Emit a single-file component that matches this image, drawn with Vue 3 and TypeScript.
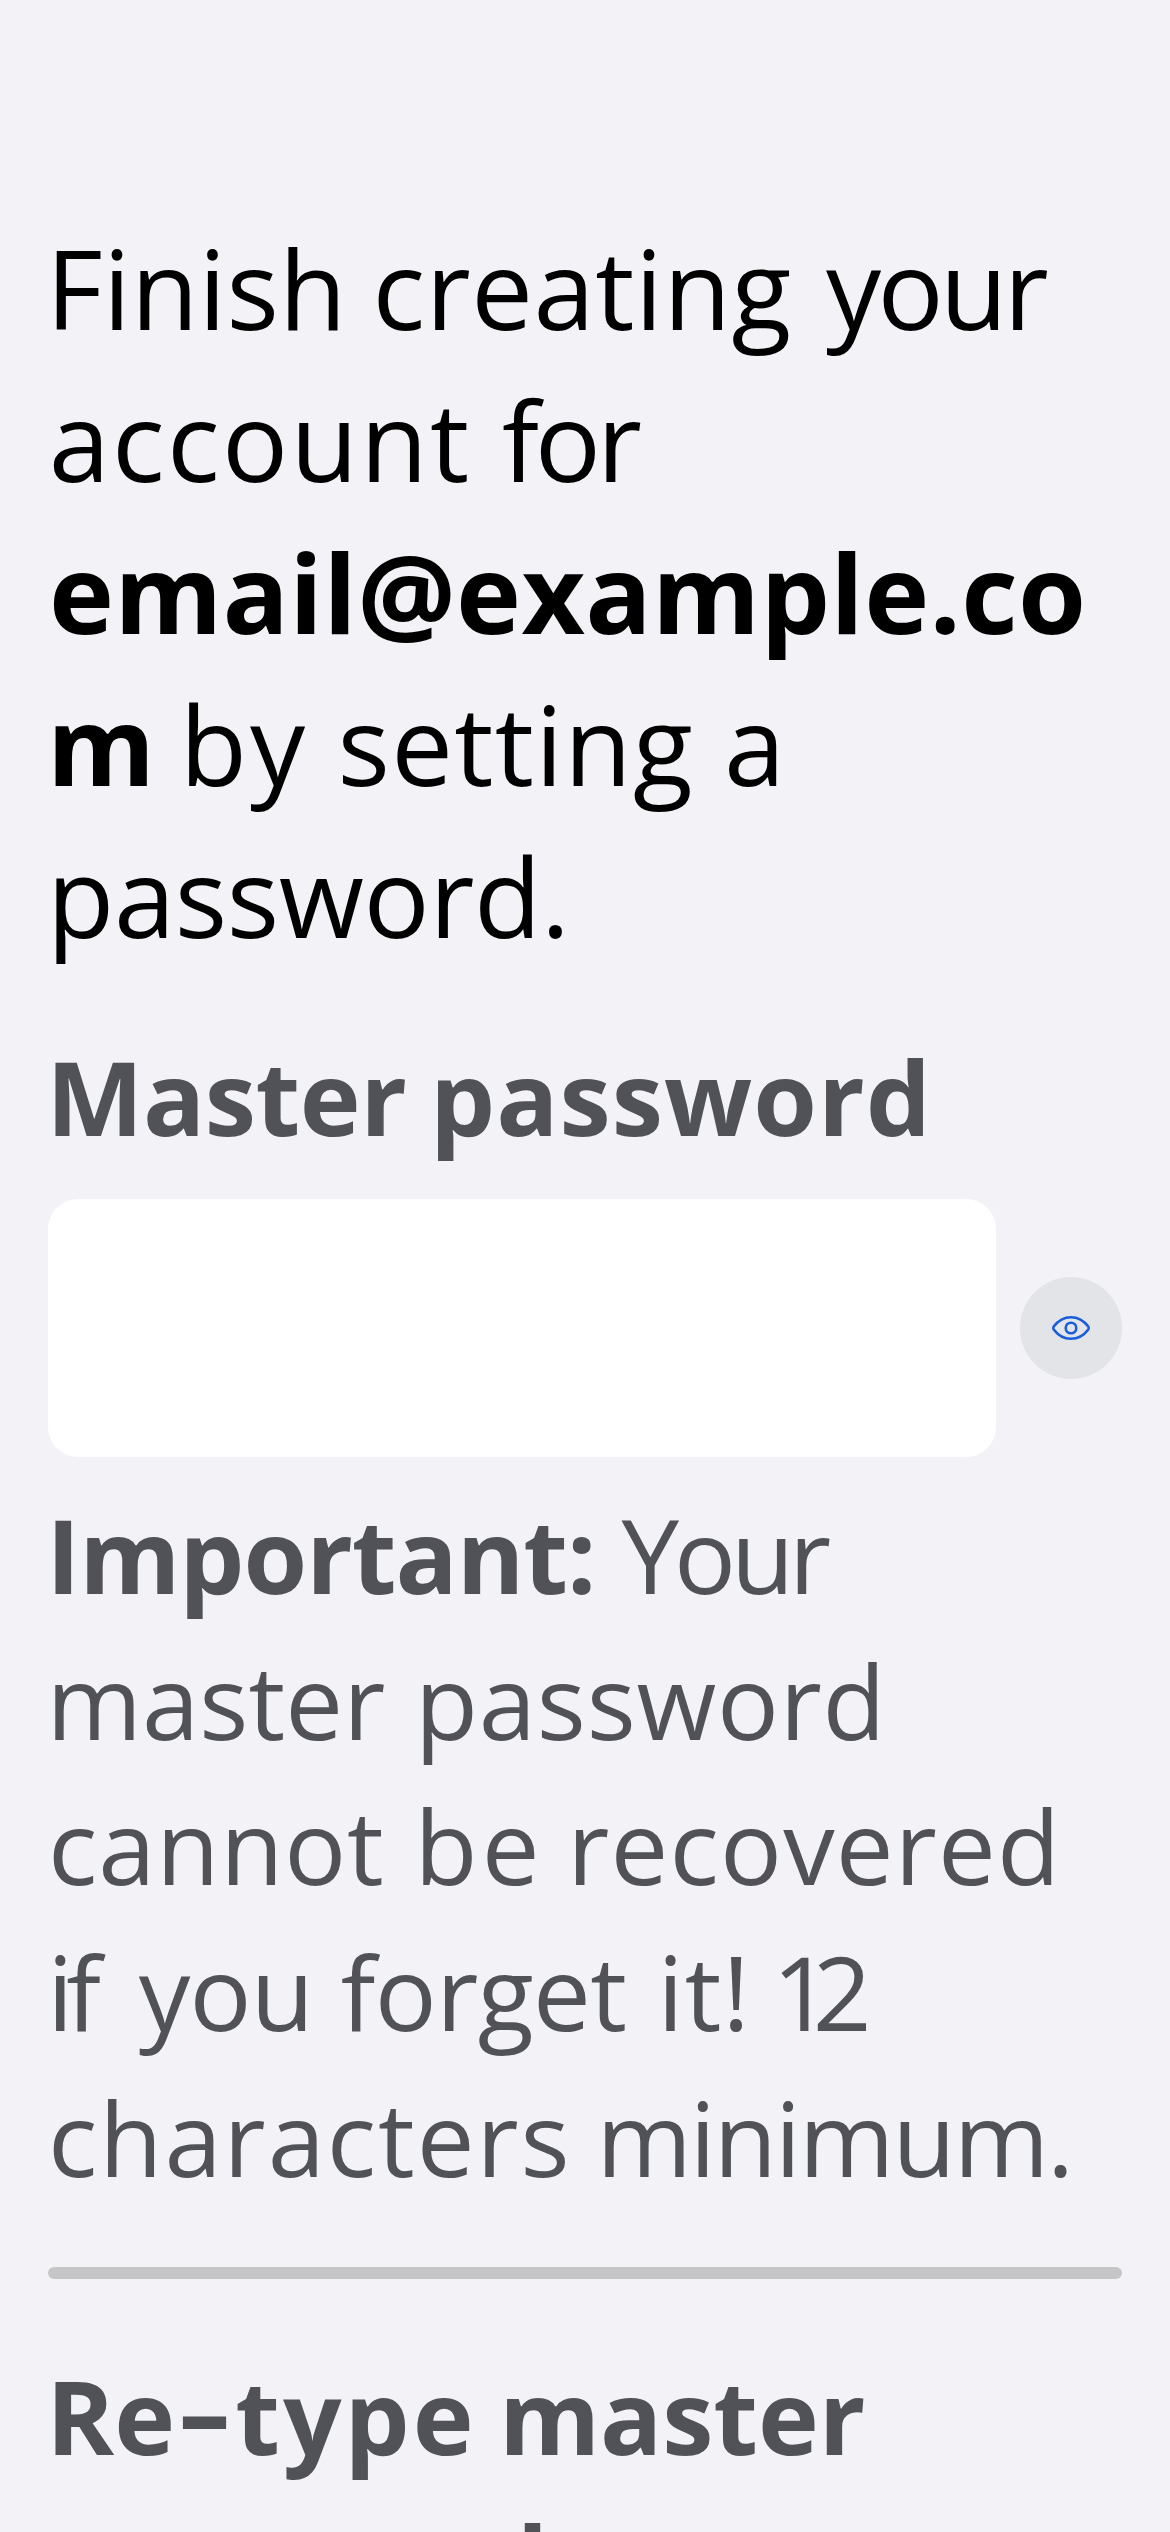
<script setup lang="ts">
import { computed, ref } from 'vue'

interface Word {
  text: string
  tracking: number
  shift?: number
  bold?: boolean
  glue?: boolean
  dash?: boolean
}

type Line = Word[]

const intro: Line[] = [
  [
    { text: 'Finish', tracking: 0.17, shift: -2 },
    { text: 'creating', tracking: 0.6, shift: -2.9 },
    { text: 'your', tracking: -3.71, shift: 5.6 },
  ],
  [
    { text: 'account', tracking: 2.3, shift: 0.7 },
    { text: 'for', tracking: -4.07, shift: 1.7 },
  ],
  [{ text: 'email@example.co', tracking: 0.31, shift: 1, bold: true }],
  [
    { text: 'm', tracking: 0, shift: -1, bold: true },
    { text: 'by', tracking: 2.85, shift: -3.8 },
    { text: 'setting', tracking: 1.27, shift: 1 },
    { text: 'a', tracking: 0, shift: 1.5 },
  ],
  [{ text: 'password.', tracking: -0.38, shift: -1 }],
]

const masterLabel: Line[] = [
  [
    { text: 'Master', tracking: -0.42, shift: -1.8, bold: true },
    { text: 'password', tracking: 1.04, shift: -3.3, bold: true },
  ],
]

const hint: Line[] = [
  [
    { text: 'Important:', tracking: -1.06, shift: -1.8, bold: true },
    { text: 'Your', tracking: -5.1, shift: -0.5 },
  ],
  [
    { text: 'master', tracking: 0.12, shift: -1.5 },
    { text: 'password', tracking: 0.73, shift: 2.8 },
  ],
  [
    { text: 'cannot', tracking: 0.84 },
    { text: 'be', tracking: 4.15, shift: 3.2 },
    { text: 'recovered', tracking: 1.17, shift: -3.2 },
  ],
  [
    { text: 'if', tracking: -7, shift: -0.8 },
    { text: 'you', tracking: -0.71, shift: 18.1 },
    { text: 'forget', tracking: -0.58, shift: 0.6 },
    { text: 'it!', tracking: 1.07, shift: 4.4 },
    { text: '12', tracking: -18.4, shift: -5.3 },
  ],
  [
    { text: 'characters', tracking: 1.95 },
    { text: 'minimum.', tracking: -1.97, shift: -2 },
  ],
]

const retypeLabel: Line[] = [
  [
    { text: 'Re', tracking: 0, shift: -1.8, bold: true },
    { text: '-', tracking: 0, shift: 12.5, bold: true, glue: true, dash: true },
    { text: 'type', tracking: 3, shift: 14.5, bold: true, glue: true },
    { text: 'master', tracking: -0.09, shift: -4.3, bold: true },
  ],
  [{ text: 'password', tracking: 1.04, shift: -0.8, bold: true }],
]

const blocks = computed(() => ({ intro, masterLabel, hint, retypeLabel }))

const password = ref('')
const visible = ref(false)

const wordStyle = (w: Word) => ({
  letterSpacing: `${w.tracking}px`,
  marginLeft: `${w.shift ?? 0}px`,
})
</script>

<template>
  <main class="screen">
    <p class="intro">
      <span v-for="(line, i) in blocks.intro" :key="i" class="line">
        <template v-for="(w, j) in line" :key="j">{{ j && !w.glue ? ' ' : '' }}<span :class="{ bold: w.bold }" :style="wordStyle(w)">{{ w.text }}</span></template>
      </span>
    </p>

    <label class="label" for="master">
      <span v-for="(line, i) in blocks.masterLabel" :key="i" class="line">
        <template v-for="(w, j) in line" :key="j">{{ j && !w.glue ? ' ' : '' }}<span :class="{ bold: w.bold }" :style="wordStyle(w)">{{ w.text }}</span></template>
      </span>
    </label>

    <div class="field">
      <input id="master" v-model="password" class="input" :type="visible ? 'text' : 'password'" />
      <button class="toggle" type="button" aria-label="Toggle visibility" @click="visible = !visible">
        <svg class="eye" viewBox="-20 -13 40 26" fill="none" stroke="currentColor" stroke-width="2.6" stroke-linejoin="round">
          <path d="M-17.3 -1.5C-13 -7.2 -7 -10.8 0 -10.8S13 -7.2 17.3 -1.5Q18.2 0 17.3 1.5C13 7.2 7 10.8 0 10.8S-13 7.2 -17.3 1.5Q-18.2 0 -17.3 -1.5Z" />
          <circle r="5.3" />
        </svg>
      </button>
    </div>

    <p class="hint">
      <span v-for="(line, i) in blocks.hint" :key="i" class="line">
        <template v-for="(w, j) in line" :key="j">{{ j && !w.glue ? ' ' : '' }}<span :class="{ bold: w.bold }" :style="wordStyle(w)">{{ w.text }}</span></template>
      </span>
    </p>

    <div class="meter"></div>

    <div class="label">
      <span v-for="(line, i) in blocks.retypeLabel" :key="i" class="line">
        <template v-for="(w, j) in line" :key="j">{{ j && !w.glue ? ' ' : '' }}<span :class="{ bold: w.bold, dash: w.dash }" :style="wordStyle(w)">{{ w.text }}</span></template>
      </span>
    </div>
  </main>
</template>

<style>
body {
  background: #f2f2f7;
}
</style>

<style scoped>
.screen {
  box-sizing: border-box;
  width: 1170px;
  height: 2532px;
  padding: 210.6px 48px 0;
  overflow: hidden;
  background: #f2f2f7;
  color: #515158;
  font-family: 'Open Sans', 'Noto Sans', sans-serif;
}
.line {
  display: block;
  white-space: nowrap;
}
.bold {
  font-weight: 700;
}
.dash {
  display: inline-block;
  line-height: 1;
  transform: translateY(-5px) scaleX(1.6);
}
.intro {
  margin: 0;
  color: #000;
  font-size: 110px;
  line-height: 152.2px;
}
.label,
.hint {
  display: block;
  margin: 0;
  font-size: 103px;
  line-height: 145.8px;
}
.intro + .label {
  margin-top: 52.5px;
}
.field {
  display: flex;
  align-items: center;
  gap: 24px;
  margin-top: 28.9px;
}
.input {
  box-sizing: border-box;
  flex: 1;
  min-width: 0;
  height: 258px;
  padding: 0 48px;
  border: 0;
  border-radius: 30px;
  outline: 0;
  background: #fff;
  font: inherit;
  font-size: 103px;
}
.toggle {
  display: flex;
  align-items: center;
  justify-content: center;
  width: 102px;
  height: 102px;
  padding: 0;
  border: 0;
  border-radius: 50%;
  background: #e2e4e8;
  color: #175ddc;
}
.eye {
  width: 40px;
  height: 26px;
}
.hint {
  margin-top: 25px;
}
.meter {
  height: 12px;
  margin-top: 56px;
  border-radius: 6px;
  background: #c6c6c8;
}
.meter + .label {
  margin-top: 64px;
}
</style>
